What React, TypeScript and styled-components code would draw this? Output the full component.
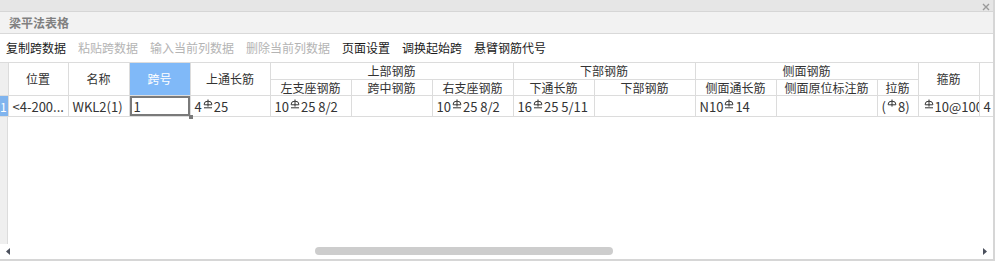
import styled, { createGlobalStyle } from 'styled-components';

const GlobalStyle = createGlobalStyle`
  html, body {
    margin: 0;
    padding: 0;
    background: #ffffff;
  }
  body {
    font-family: "Noto Sans CJK SC", "Noto Sans", sans-serif;
  }
`;

const Window = styled.div`
  display: flex;
  flex-direction: column;
  width: 995px;
  height: 261px;
  box-sizing: border-box;
  border-right: 2px solid #d6d6d6;
  border-bottom: 2px solid #d6d6d6;
  background: #ffffff;
  overflow: hidden;
`;

const TopStrip = styled.div`
  display: flex;
  justify-content: flex-end;
  align-items: center;
  height: 11px;
  padding-right: 3px;
  background: #e6e6e6;
  border-bottom: 1px solid #d6d6d6;
`;

const CloseButton = styled.svg`
  width: 8px;
  height: 8px;
  margin-top: 3px;
`;

const Caption = styled.div`
  display: flex;
  align-items: center;
  height: 21px;
  padding-left: 9px;
  background: #f2f2f2;
  border-bottom: 1px solid #d9d9d9;
  color: #808080;
  font-size: 12px;
  font-weight: 700;
`;

const Toolbar = styled.div`
  display: flex;
  align-items: center;
  gap: 12px;
  height: 28px;
  padding-left: 6px;
`;

const ToolButton = styled.span<{ $disabled?: boolean }>`
  font-size: 12px;
  line-height: 14px;
  color: ${(p) => (p.$disabled ? '#b4b4b4' : '#1a1a1a')};
  white-space: nowrap;
`;

const GridBody = styled.div`
  flex: 1;
  overflow: hidden;
  background: linear-gradient(to right, #efefef 0, #efefef 7px, #dcdcdc 7px, #dcdcdc 8px, #ffffff 8px);
`;

const Table = styled.table`
  border-collapse: collapse;
  table-layout: fixed;
  font-size: 12px;
  color: #333333;
`;

const HeadCell = styled.th<{ $active?: boolean; $h?: number }>`
  height: ${(p) => p.$h ?? 16}px;
  padding: 0;
  border: 1px solid #dcdcdc;
  font-weight: 400;
  line-height: 14px;
  text-align: center;
  white-space: nowrap;
  overflow: hidden;
  background: ${(p) => (p.$active ? '#80b9f8' : '#ffffff')};
  color: ${(p) => (p.$active ? '#ffffff' : '#333333')};
`;

const CornerCell = styled.th`
  padding: 0;
  background: #efefef;
  border: 1px solid #dcdcdc;
  border-left: none;
`;

const RowNumber = styled.td`
  padding: 0;
  height: 20px;
  background: #80b4ee;
  color: #ffffff;
  font-size: 12px;
  text-align: left;
  border: 1px solid #dcdcdc;
  border-left: none;
  overflow: hidden;
`;

const Cell = styled.td<{ $selected?: boolean }>`
  position: relative;
  height: 20px;
  padding: 0 0 0 4px;
  border: 1px solid #dcdcdc;
  font-size: 13px;
  line-height: 15px;
  white-space: nowrap;
  overflow: ${(p) => (p.$selected ? 'visible' : 'hidden')};
  box-shadow: ${(p) => (p.$selected ? 'inset 0 0 0 2px #7a7a7a' : 'none')};
`;

const FillHandle = styled.span`
  position: absolute;
  right: -3px;
  bottom: -3px;
  width: 4px;
  height: 4px;
  background: #7a7a7a;
`;

const Mark = styled.svg`
  width: 10px;
  height: 10px;
  margin: 0 1px;
  vertical-align: 3px;
`;

const ScrollRow = styled.div`
  display: flex;
  align-items: center;
  height: 14px;
  padding: 0 6px;
  margin-bottom: 1px;
`;

const Arrow = styled.svg`
  width: 4px;
  height: 7px;
  flex: none;
`;

const Track = styled.div`
  flex: 1;
  display: flex;
  padding-left: 305px;
  padding-right: 370px;
`;

const Thumb = styled.div`
  flex: 1;
  height: 8px;
  border-radius: 4px;
  background: #cdcdcd;
`;

/* 三级钢符号 / 一级钢符号 */
const Steel = ({ grade = 3 }: { grade?: 1 | 3 }) => (
  <Mark viewBox="0 0 10 10">
    <path d="M1.2 5 A3.8 2.8 0 0 1 8.8 5 L8.8 5.8 L1.2 5.8 Z" fill="none" stroke="#333" strokeWidth="1" />
    <path d="M5 0.5 V7.6" stroke="#333" strokeWidth="1" />
    {grade === 3 && <path d="M1 8.8 H9" stroke="#333" strokeWidth="1" />}
  </Mark>
);

const tools = [
  { label: '复制跨数据' },
  { label: '粘贴跨数据', disabled: true },
  { label: '输入当前列数据', disabled: true },
  { label: '删除当前列数据', disabled: true },
  { label: '页面设置' },
  { label: '调换起始跨' },
  { label: '悬臂钢筋代号' },
];

const widths = [8, 60, 61, 61, 80, 81, 81, 81, 81, 101, 81, 101, 41, 61, 40];

export default function App() {
  return (
    <>
      <GlobalStyle />
      <Window>
        <TopStrip>
          <CloseButton viewBox="0 0 8 8">
            <path d="M1 1 L7 7 M7 1 L1 7" stroke="#9a9a9a" strokeWidth="1.4" />
          </CloseButton>
        </TopStrip>
        <Caption>梁平法表格</Caption>
        <Toolbar>
          {tools.map((t) => (
            <ToolButton key={t.label} $disabled={t.disabled}>
              {t.label}
            </ToolButton>
          ))}
        </Toolbar>
        <GridBody>
          <Table style={{ width: widths.reduce((a, b) => a + b, 0) }}>
            <colgroup>
              {widths.map((w, i) => (
                <col key={i} style={{ width: w }} />
              ))}
            </colgroup>
            <thead>
              <tr>
                <CornerCell rowSpan={2} />
                <HeadCell rowSpan={2}>位置</HeadCell>
                <HeadCell rowSpan={2}>名称</HeadCell>
                <HeadCell rowSpan={2} $active>
                  跨号
                </HeadCell>
                <HeadCell rowSpan={2}>上通长筋</HeadCell>
                <HeadCell colSpan={3}>上部钢筋</HeadCell>
                <HeadCell colSpan={2}>下部钢筋</HeadCell>
                <HeadCell colSpan={3}>侧面钢筋</HeadCell>
                <HeadCell rowSpan={2}>箍筋</HeadCell>
                <HeadCell rowSpan={2} />
              </tr>
              <tr>
                <HeadCell $h={15}>左支座钢筋</HeadCell>
                <HeadCell $h={15}>跨中钢筋</HeadCell>
                <HeadCell $h={15}>右支座钢筋</HeadCell>
                <HeadCell $h={15}>下通长筋</HeadCell>
                <HeadCell $h={15}>下部钢筋</HeadCell>
                <HeadCell $h={15}>侧面通长筋</HeadCell>
                <HeadCell $h={15}>侧面原位标注筋</HeadCell>
                <HeadCell $h={15}>拉筋</HeadCell>
              </tr>
            </thead>
            <tbody>
              <tr>
                <RowNumber>1</RowNumber>
                <Cell>&lt;4-200...</Cell>
                <Cell>WKL2(1)</Cell>
                <Cell $selected>
                  1
                  <FillHandle />
                </Cell>
                <Cell>
                  4<Steel />25
                </Cell>
                <Cell>
                  10<Steel />25 8/2
                </Cell>
                <Cell />
                <Cell>
                  10<Steel />25 8/2
                </Cell>
                <Cell>
                  16<Steel />25 5/11
                </Cell>
                <Cell />
                <Cell>
                  N10<Steel />14
                </Cell>
                <Cell />
                <Cell>
                  (<Steel grade={1} />8)
                </Cell>
                <Cell>
                  <Steel />10@100
                </Cell>
                <Cell>4</Cell>
              </tr>
            </tbody>
          </Table>
        </GridBody>
        <ScrollRow>
          <Arrow viewBox="0 0 4 7">
            <path d="M4 0 L0 3.5 L4 7 Z" fill="#4a4f5c" />
          </Arrow>
          <Track>
            <Thumb />
          </Track>
          <Arrow viewBox="0 0 4 7">
            <path d="M0 0 L4 3.5 L0 7 Z" fill="#4a4f5c" />
          </Arrow>
        </ScrollRow>
      </Window>
    </>
  );
}
